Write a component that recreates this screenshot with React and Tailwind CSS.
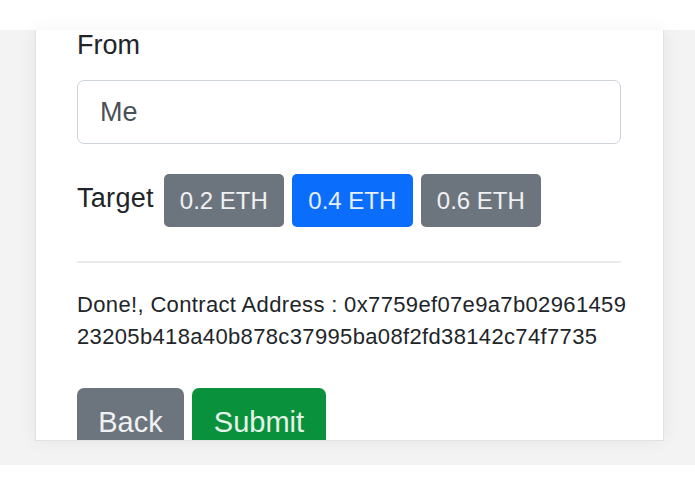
export default function App() {
  const font = { fontFamily: '"Liberation Sans", Arial, sans-serif' };
  return (
    <div className="w-[695px] h-[494px] bg-white overflow-hidden" style={font}>
      <div className="h-[30px] bg-white" />
      {/* Gray band */}
      <div className="h-[435px] bg-[#f3f3f3] pl-[35px] pr-[31px]">
        {/* Card */}
        <div className="h-[411px] bg-white border-x border-b border-[#e2e2e2] shadow-[0_0_18px_rgba(0,0,0,0.06)] overflow-hidden">
          <div className="pl-[41px] pr-[42px]">
            <div className="text-[27px] leading-[30px] text-[#212529]">From</div>

            <div className="mt-[20px] h-[64px] border border-[#ced4da] rounded-[7px] flex items-center px-[22px] text-[27px] text-[#495057]">
              Me
            </div>

            <div className="mt-[30px] flex items-center gap-[8px]">
              <span className="text-[27px] text-[#212529] -mt-[4px] mr-[2px] tracking-[0.3px]">Target</span>
              <button className="w-[120px] h-[53px] rounded-[5px] bg-[#6c757d] text-white/90 text-[24px]">0.2 ETH</button>
              <button className="w-[121px] h-[53px] rounded-[5px] bg-[#0a6dfc] text-white/90 text-[24px]">0.4 ETH</button>
              <button className="w-[120px] h-[53px] rounded-[5px] bg-[#6c757d] text-white/90 text-[24px]">0.6 ETH</button>
            </div>

            <hr className="mt-[34px] border-t-2 border-[#ebebeb]" />

            <p className="mt-[26px] text-[22px] leading-[32px] tracking-[0.35px] text-[#212529] whitespace-nowrap">
              Done!, Contract Address : 0x7759ef07e9a7b02961459
              <br />
              23205b418a40b878c37995ba08f2fd38142c74f7735
            </p>

            <div className="mt-[35px] flex gap-[8px]">
              <button className="w-[107px] h-[69px] rounded-[7px] bg-[#6c757d] text-white/90 text-[29px] leading-[45px]">Back</button>
              <button className="w-[134px] h-[69px] rounded-[7px] bg-[#0a913b] text-white/90 text-[29px] leading-[45px]">Submit</button>
            </div>
          </div>
        </div>
      </div>
    </div>
  );
}
